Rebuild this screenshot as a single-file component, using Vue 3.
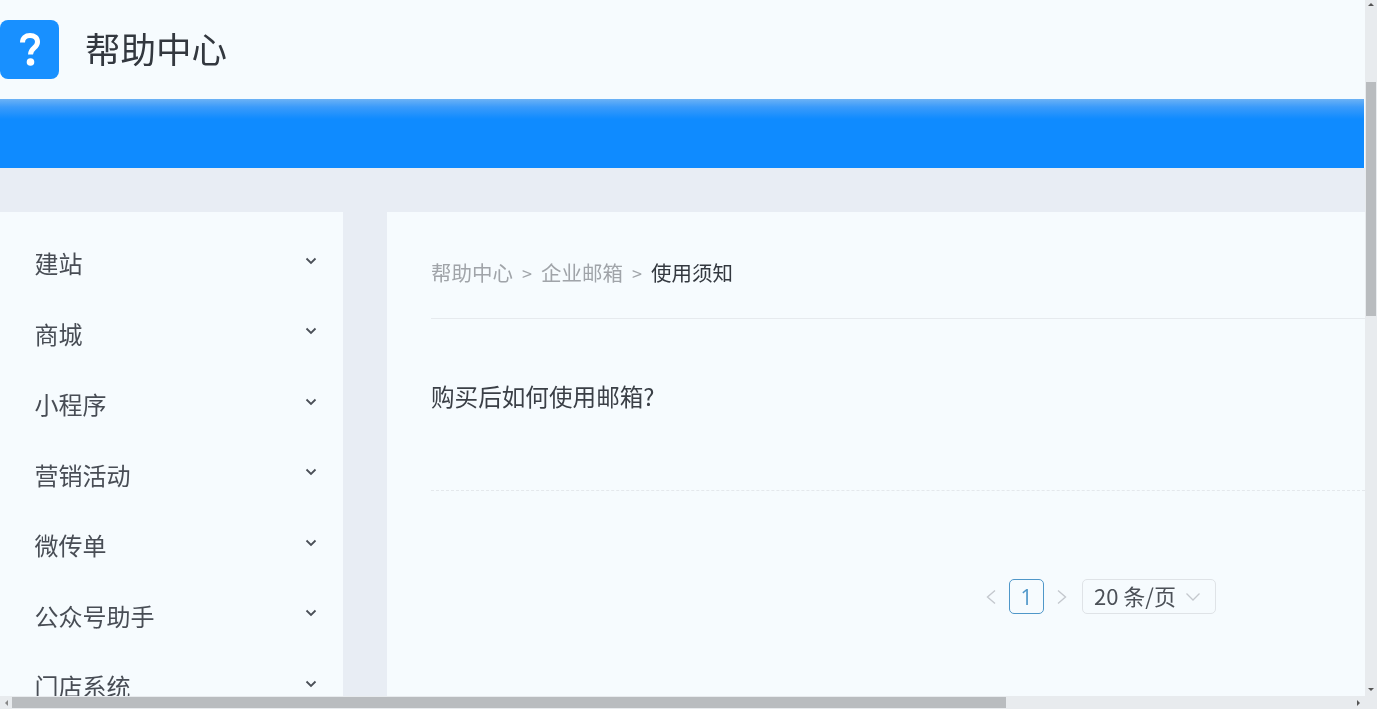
<script setup>
const menus = ['建站', '商城', '小程序', '营销活动', '微传单', '公众号助手', '门店系统']
</script>

<template>
  <div class="window">
    <div class="upper">
      <div class="viewport">
        <header class="header">
          <div class="logo">
            <svg width="30" height="38" viewBox="0 0 30 38">
              <path d="M7.500 12.500c0-4.500 3-7 7.500-7s7.500 2.500 7.500 6.500c0 6-7 6-7 12.500" fill="none" stroke="#fff" stroke-width="5" />
              <circle cx="15.500" cy="32" r="3.800" fill="#fff" />
            </svg>
          </div>
          <h1 class="title">帮助中心</h1>
        </header>
        <div class="band"></div>
        <div class="layout">
          <nav class="side">
            <div v-for="m in menus" :key="m" class="item">
              <span>{{ m }}</span>
              <svg class="chev" width="12" height="8" viewBox="0 0 12 8">
                <path d="M1.500 1.500 6 6l4.500-4.500" fill="none" stroke="#4a4f57" stroke-width="1.800" />
              </svg>
            </div>
          </nav>
          <main class="main">
            <div class="crumb">
              <span class="muted">帮助中心</span><span class="muted sep">&gt;</span><span class="muted">企业邮箱</span><span class="muted sep">&gt;</span><span class="current">使用须知</span>
            </div>
            <div class="article">
              <div class="question">购买后如何使用邮箱?</div>
            </div>
            <div class="pager">
              <svg width="14" height="20" viewBox="0 0 14 20"><path d="M11 3.500 3.500 10l7.500 6.500" fill="none" stroke="#c4c8ce" stroke-width="1.400" /></svg>
              <div class="page">1</div>
              <svg width="14" height="20" viewBox="0 0 14 20"><path d="M3 3.500 10.500 10 3 16.500" fill="none" stroke="#c4c8ce" stroke-width="1.400" /></svg>
              <div class="size">
                <span class="size-label">20 条/页</span>
                <svg width="16" height="10" viewBox="0 0 16 10"><path d="M1.500 1.500 8 8l6.500-6.500" fill="none" stroke="#c4c8ce" stroke-width="1.300" /></svg>
              </div>
            </div>
          </main>
        </div>
      </div>
      <div class="vbar">
        <span class="tri up"></span>
        <div class="vthumb"></div>
        <span class="tri down"></span>
      </div>
    </div>
    <div class="hbar">
      <div class="htrack">
        <span class="tri left"></span>
        <div class="hthumb"></div>
        <span class="tri right"></span>
      </div>
      <div class="corner"></div>
    </div>
  </div>
</template>

<style scoped>
.window {
  width: 1377px;
  height: 709px;
  overflow: hidden;
  display: flex;
  flex-direction: column;
  background: #f6fbfe;
  font-family: "Noto Sans CJK SC", "Open Sans", sans-serif;
  filter: blur(0.35px);
}
.upper {
  display: flex;
  height: 696px;
}
.viewport {
  width: 1365px;
  overflow: hidden;
}
.header {
  height: 99px;
  display: flex;
  align-items: center;
  gap: 26px;
  box-sizing: border-box;
  padding-bottom: 1px;
}
.logo {
  width: 59px;
  height: 59px;
  border-radius: 8px;
  background: #1890ff;
  display: flex;
  align-items: center;
  justify-content: center;
}
.title {
  margin: -3px 0 0;
  font-size: 35.500px;
  font-weight: 400;
  color: #33383f;
  line-height: 59px;
}
.band {
  height: 69px;
  margin-right: 1px;
  background: linear-gradient(to bottom, #6cb2f5 0, #3b9bfa 8px, #0f8bff 20px, #0f8bff 100%);
}
.layout {
  display: flex;
  gap: 44px;
  padding-top: 44px;
  background: #e8edf4;
}
.side {
  width: 343px;
  flex: none;
  background: #f6fbfe;
  padding-top: 15.700px;
  height: 520px;
}
.item {
  height: 70.500px;
  display: flex;
  align-items: center;
  justify-content: space-between;
  padding: 0 26px 0 34.500px;
  font-size: 24px;
  color: #484d55;
  box-sizing: border-box;
}
.chev {
  margin-top: -4px;
}
.main {
  flex: 1;
  background: #f6fbfe;
  padding-left: 44px;
}
.crumb {
  height: 107px;
  box-sizing: border-box;
  padding-top: 44px;
  line-height: 32px;
  font-size: 20.500px;
  border-bottom: 1px solid #e6eaee;
}
.muted {
  color: #a0a4a9;
}
.sep {
  margin: 0 9px;
  font-size: 18px;
}
.current {
  color: #33383f;
}
.article {
  height: 172px;
  box-sizing: border-box;
  border-bottom: 1px dashed #e4e8ec;
  padding-top: 59px;
}
.question {
  font-size: 23.600px;
  line-height: 36px;
  color: #3a3f46;
}
.pager {
  display: flex;
  align-items: center;
  margin-top: 88px;
  padding-left: 553px;
  gap: 0;
  height: 35px;
}
.page {
  width: 35px;
  height: 35px;
  box-sizing: border-box;
  border: 1.500px solid #4f97c9;
  border-radius: 5px;
  margin: 0 11px;
  display: flex;
  align-items: center;
  justify-content: center;
  color: #4f97c9;
  font-size: 21px;
  font-family: "Open Sans", sans-serif;
}
.size {
  width: 134px;
  height: 35px;
  box-sizing: border-box;
  margin-left: 13px;
  border: 1.500px solid #dfe3e7;
  border-radius: 5px;
  display: flex;
  align-items: center;
  justify-content: space-between;
  padding: 0 14px 0 11px;
  font-size: 22px;
  color: #4c5158;
}
.size-label {
  line-height: 30px;
  padding-bottom: 3px;
}
.vbar {
  width: 12px;
  background: #e8ebee;
  position: relative;
}
.vthumb {
  position: absolute;
  top: 82px;
  left: 1px;
  width: 10px;
  height: 234px;
  background: #b9bcbf;
}
.hbar {
  height: 13px;
  display: flex;
}
.htrack {
  width: 1365px;
  background: #e8ebee;
  position: relative;
}
.hthumb {
  position: absolute;
  left: 12px;
  top: 1px;
  width: 994px;
  height: 11px;
  background: #b9bcbf;
}
.corner {
  width: 12px;
  background: #e8ebee;
}
.tri {
  position: absolute;
  width: 0;
  height: 0;
  border: 3px solid transparent;
}
.up {
  top: 0;
  left: 3px;
  border-bottom-color: #555;
}
.down {
  bottom: 2px;
  left: 3px;
  border-top-color: #555;
}
.left {
  left: 2px;
  top: 4px;
  border-right-color: #888;
}
.right {
  right: 2px;
  top: 4px;
  border-left-color: #555;
}
</style>

<style>
html, body {
  margin: 0;
  overflow: hidden;
}
</style>
